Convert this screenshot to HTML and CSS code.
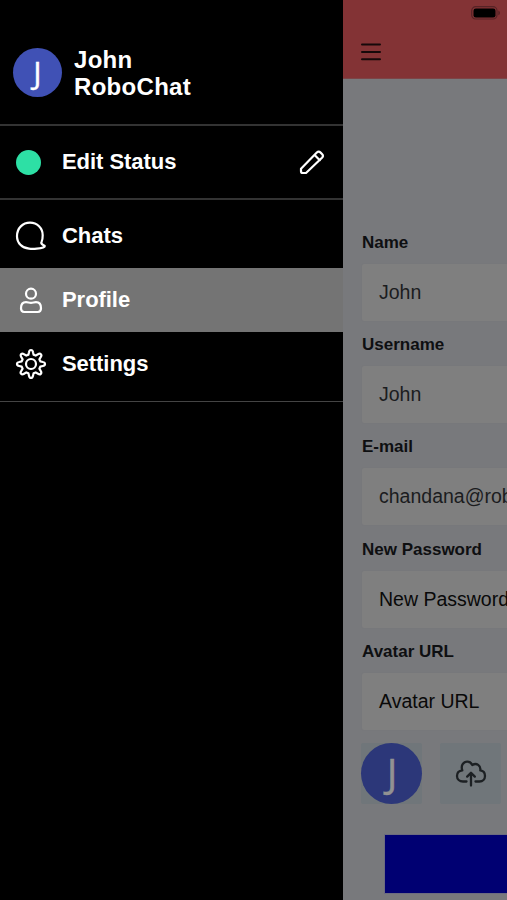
FILE: index.html
```html
<!DOCTYPE html>
<html lang="en">
<head>
<meta charset="utf-8">
<title>RoboChat</title>
<link rel="stylesheet" href="styles.css">
</head>
<body>
<div class="app">
  <nav class="drawer">
    <header class="account">
      <div class="avatar avatar-small"><span>J</span></div>
      <div class="account-name">John<br>RoboChat</div>
    </header>
    <div class="row status">
      <span class="dot"></span>
      <span class="label">Edit Status</span>
      <svg class="pencil" width="26" height="26" viewBox="0 0 26 26"><path d="M2 22.200v-2.400L17.800 3.600a2.700 2.700 0 0 1 3.800 0l1.400 1.400a2.700 2.700 0 0 1 0 3.800L7 24H3.800A1.800 1.800 0 0 1 2 22.200Z M15.600 6l5.200 5.200"/></svg>
    </div>
    <div class="menu">
      <div class="row">
        <svg width="32" height="32" viewBox="0 0 32 32"><path d="M26.600 21.800c-.7 1.300-.2 2.200 1.200 3 .9.5 2 .6 2 1.300 0 1.500-4.500 2.400-8 2.500C19 29 16.500 29 14 28.700 7 28 2 23 2 16.200 2 8 7.800 2.700 15 2.700s12.700 5.300 12.700 12.500c0 2.700-.3 5-1.100 6.600Z"/></svg>
        <span class="label">Chats</span>
      </div>
      <div class="row active">
        <svg width="32" height="32" viewBox="0 0 32 32"><circle cx="16" cy="9.700" r="5"/><path d="M11 18.200c2 0 3 .7 5 .7s3-.7 5-.7c3 0 5 2.300 5 6.100 0 2.500-1 3.700-3.200 3.700H9.200C7 28 6 26.800 6 24.300c0-3.800 2-6.100 5-6.100Z"/></svg>
        <span class="label">Profile</span>
      </div>
      <div class="row">
        <svg width="32" height="32" viewBox="0 0 32 32"><circle cx="16" cy="16" r="5"/><path d="M14 4.200Q14.400 2 16 2T18 4.200L18.600 6.700 20.700 7.600 22.900 6.300Q24.800 5.100 25.900 6.200T25.700 9.100L24.400 11.300 25.300 13.400 27.800 14Q30 14.400 30 16T27.800 18L25.300 18.600 24.400 20.700 25.700 22.900Q26.900 24.800 25.800 25.900T22.900 25.700L20.700 24.400 18.600 25.300 18 27.800Q17.600 30 16 30T14 27.800L13.400 25.300 11.300 24.400 9.100 25.700Q7.200 26.900 6.100 25.800T6.300 22.900L7.600 20.700 6.700 18.600 4.200 18Q2 17.600 2 16T4.200 14L6.700 13.400 7.600 11.300 6.300 9.100Q5.100 7.200 6.200 6.100T9.100 6.300L11.300 7.600 13.400 6.700Z"/></svg>
        <span class="label">Settings</span>
      </div>
    </div>
  </nav>
  <main class="page">
    <header class="topbar">
      <svg class="battery" width="30" height="14" viewBox="0 0 30 14"><rect class="shell" x=".7" y=".7" width="25.300" height="12.300" rx="4"/><rect x="2.500" y="2.500" width="22" height="9" rx="2.300"/><path class="cap" d="M27.300 4.500c2.200.8 2.200 4 0 4.800Z"/></svg>
      <svg class="burger" width="20" height="18" viewBox="0 0 20 18"><path d="M1 1.600h18M1 9h18M1 16.300h18"/></svg>
    </header>
    <form class="form">
      <label>Name</label><div class="field">John</div>
      <label>Username</label><div class="field">John</div>
      <label>E-mail</label><div class="field">chandana@rob</div>
      <label>New Password</label><div class="field placeholder">New Password</div>
      <label>Avatar URL</label><div class="field placeholder">Avatar URL</div>
      <div class="tiles">
        <div class="tile"><div class="avatar avatar-large"><span>J</span></div></div>
        <div class="tile"><svg class="cloud" width="32" height="28" viewBox="0 0 32 28"><path d="M11.500 22.500H8C4.500 22.500 2 20 2 17c0-3.200 2-5.400 5.300-5.700C5.500 6.500 8.500 2.700 12.300 2.700c2.300 0 4 1.300 5 3.300 4.200-2.600 8.800.4 8 5.400 3 .3 4.700 2.600 4.700 5.600 0 3-2.300 5.500-5.500 5.500h-4M16 26.500V14M12.200 17.600l3.800-3.900 3.800 3.900"/></svg></div>
      </div>
      <div class="submit"></div>
    </form>
  </main>
</div>
</body>
</html>
```

FILE: styles.css
```css
* { box-sizing: border-box; }
body { margin: 0; font-family: "Liberation Sans", Arial, sans-serif; }
.app { display: flex; width: 507px; height: 900px; overflow: hidden; background: #000; }
svg { display: block; fill: none; stroke-linecap: round; stroke-linejoin: round; }

.drawer { flex: 0 0 343px; background: #000; color: #fff; }
.drawer svg { stroke: #fff; stroke-width: 2.200; }
.account { display: flex; align-items: center; height: 126px; padding: 20px 13px 0; gap: 12px; border-bottom: 2px solid #333; }
.account-name { font-size: 24px; line-height: 27px; font-weight: bold; letter-spacing: .3px; padding-top: 2px; }
.avatar { display: flex; align-items: center; justify-content: center; border-radius: 50%; font-family: "Open Sans", sans-serif; }
.avatar-small { width: 49px; height: 49px; background: #4051b5; font-size: 31px; line-height: 49px; -webkit-text-stroke: .4px #fff; }
.row { display: flex; align-items: center; height: 64px; padding-left: 15px; }
.row .label { font-size: 22px; font-weight: bold; margin-left: 15px; letter-spacing: -.05px; }
.status { height: 74px; padding: 0 18px 0 16px; border-bottom: 2px solid #333; }
.status .label { margin-left: 21px; }
.dot { width: 25px; height: 25px; border-radius: 50%; background: #2de0a5; }
.status .pencil { margin-left: auto; }
.menu { padding: 4px 0 5px; border-bottom: 1px solid #444; }
.active { background: #747474; }

.page { flex: 0 0 164px; background: #78797c; overflow: hidden; color: #0e0f11; }
.topbar { height: 79px; background: #833335; border-bottom: 1px solid #7c4547; padding: 6px 6px 0 18px; }
.battery { margin-left: auto; }
.battery rect { fill: #000; }
.battery .shell { fill: none; stroke: #572326; stroke-width: 1.200; }
.battery .cap { fill: #572326; }
.burger { margin-top: 23px; stroke: #16090a; stroke-width: 2; }
.form { width: 400px; padding: 152px 0 0 18px; }
label { display: block; height: 32px; padding: 2px 0 0 1px; font-size: 17px; line-height: 20px; font-weight: bold; }
.field { height: 59px; margin-bottom: 11.200px; padding-left: 17px; border: 1px solid #77787b; border-radius: 3px; background: #7f7f7f; font-size: 19.500px; line-height: 56px; color: #1b1c1e; }
.placeholder { color: #090909; }
.tiles { display: flex; gap: 18px; margin-top: 12px; }
.tile { display: flex; align-items: center; justify-content: center; width: 61px; height: 61px; border-radius: 2px; background: #70767a; }
.avatar-large { width: 61px; height: 61px; background: #2c3779; color: #929292; font-size: 39.500px; line-height: 61px; -webkit-text-stroke: .5px #929292; }
.avatar-large span { padding-left: 1px; }
.cloud { stroke: #1c2023; stroke-width: 2.300; }
.submit { height: 60px; margin: 30px 0 0 23px; border: 1px solid #6c6c80; background: #000072; }
```
